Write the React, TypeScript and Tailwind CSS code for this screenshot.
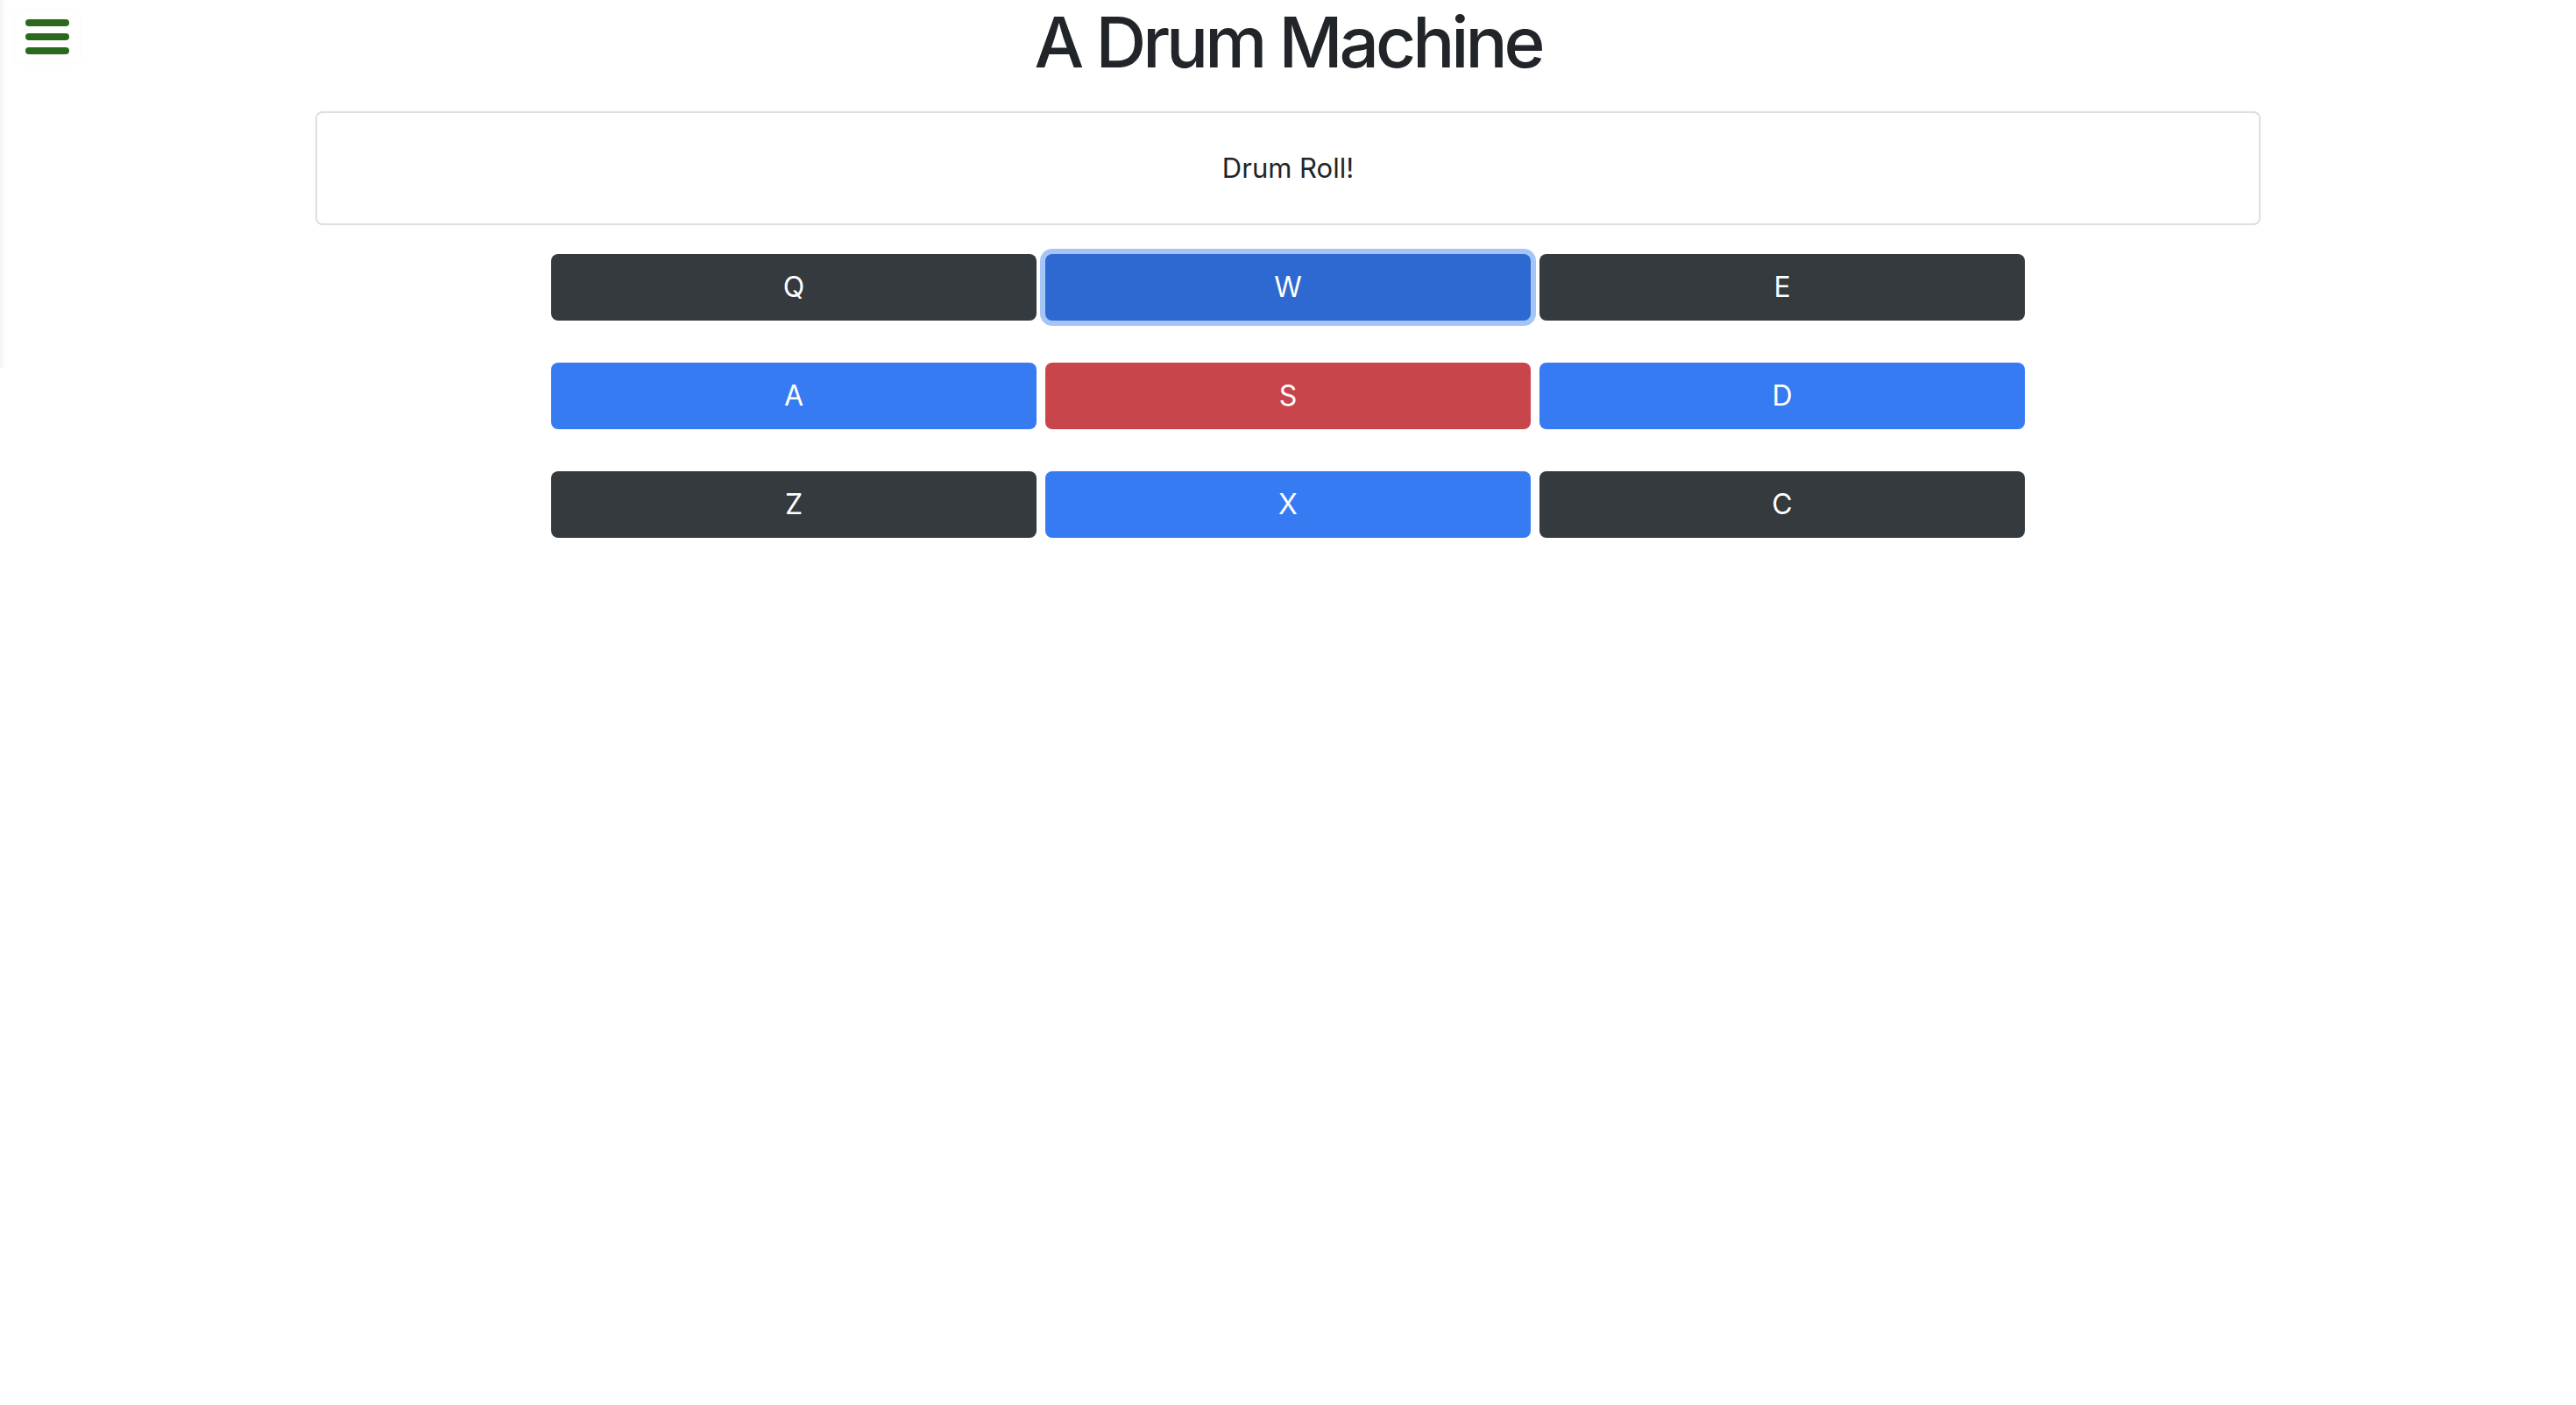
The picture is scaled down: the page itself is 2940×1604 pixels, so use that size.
import React from 'react';

type Pad = { key: string; color: string };

const pads: Pad[] = [
  { key: 'Q', color: 'bg-[#353a3f]' },
  { key: 'W', color: 'bg-[#2e69d1] ring-[6px] ring-[#a4c5f6]' },
  { key: 'E', color: 'bg-[#353a3f]' },
  { key: 'A', color: 'bg-[#377bf2]' },
  { key: 'S', color: 'bg-[#c9454c]' },
  { key: 'D', color: 'bg-[#377bf2]' },
  { key: 'Z', color: 'bg-[#353a3f]' },
  { key: 'X', color: 'bg-[#377bf2]' },
  { key: 'C', color: 'bg-[#353a3f]' },
];

const MenuButton: React.FC = () => (
  <button className="absolute left-[17px] top-[13px] w-[74px] h-[58px] flex flex-col items-center justify-center gap-[8px] rounded-md bg-white shadow-[0_0_6px_rgba(0,0,0,0.03)]">
    <span className="block w-[50px] h-[8px] rounded-full bg-[#2b6a1e]" />
    <span className="block w-[50px] h-[8px] rounded-full bg-[#2b6a1e]" />
    <span className="block w-[50px] h-[8px] rounded-full bg-[#2b6a1e]" />
  </button>
);

export default function App() {
  return (
    <div className="relative min-h-screen bg-white text-[#212529] font-['Inter','Helvetica_Neue',Arial,sans-serif]">
      <div className="absolute left-0 top-0 w-[6px] h-[420px] bg-gradient-to-r from-[#f3f3f3] to-transparent" />
      <MenuButton />

      <div className="w-[2220px] mx-auto">
        <h1 className="text-center text-[80px] leading-[96px] font-medium tracking-[-4px]">A Drum Machine</h1>

        <div className="mt-[31px] h-[130px] flex items-center justify-center rounded-[8px] border-2 border-[#dfdfdf]">
          <p className="text-[31px] leading-[48px]">Drum Roll!</p>
        </div>

        <div className="mt-[33px] mx-auto w-[1682px] grid grid-cols-3 gap-x-[10px] gap-y-[48px]">
          {pads.map((pad) => (
            <button
              key={pad.key}
              className={`h-[76px] rounded-[8px] text-white text-[32px] leading-[48px] ${pad.color}`}
            >
              {pad.key}
            </button>
          ))}
        </div>
      </div>
    </div>
  );
}
